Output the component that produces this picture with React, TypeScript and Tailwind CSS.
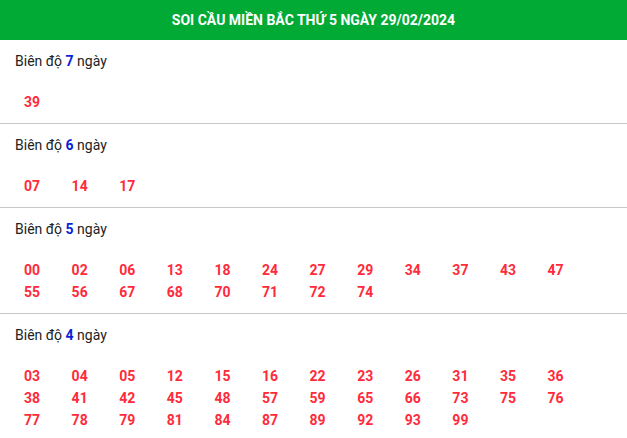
import React from 'react';

interface Group {
  days: number;
  numbers: string[];
}

const groups: Group[] = [
  { days: 7, numbers: ['39'] },
  { days: 6, numbers: ['07', '14', '17'] },
  {
    days: 5,
    numbers: ['00', '02', '06', '13', '18', '24', '27', '29', '34', '37', '43', '47', '55', '56', '67', '68', '70', '71', '72', '74'],
  },
  {
    days: 4,
    numbers: [
      '03', '04', '05', '12', '15', '16', '22', '23', '26', '31', '35', '36',
      '38', '41', '42', '45', '48', '57', '59', '65', '66', '73', '75', '76',
      '77', '78', '79', '81', '84', '87', '89', '92', '93', '99',
    ],
  },
];

export default function App() {
  return (
    <div className="w-[627px] bg-white font-['Roboto',sans-serif]">
      <div className="h-[40px] bg-[#00aa35] flex items-center justify-center">
        <h1 className="text-white font-bold text-[14px]">SOI CẦU MIỀN BẮC THỨ 5 NGÀY 29/02/2024</h1>
      </div>

      {groups.map((g, i) => (
        <div
          key={g.days}
          className={`px-[15px] pt-[11px] pb-[10px] ${i < groups.length - 1 ? 'border-b border-[#c8c8c8]' : ''}`}
        >
          <div className="text-[14px] leading-[20px] text-[#222]">
            Biên độ <span className="font-bold text-[#0a1fd6]">{g.days}</span> ngày
          </div>
          <div className="mt-[20px] pl-[9px] grid grid-cols-[repeat(12,47.6px)]">
            {g.numbers.map((n) => (
              <span key={n} className="text-[14px] leading-[22px] font-bold text-[#ff2a3a]">
                {n}
              </span>
            ))}
          </div>
        </div>
      ))}
    </div>
  );
}
